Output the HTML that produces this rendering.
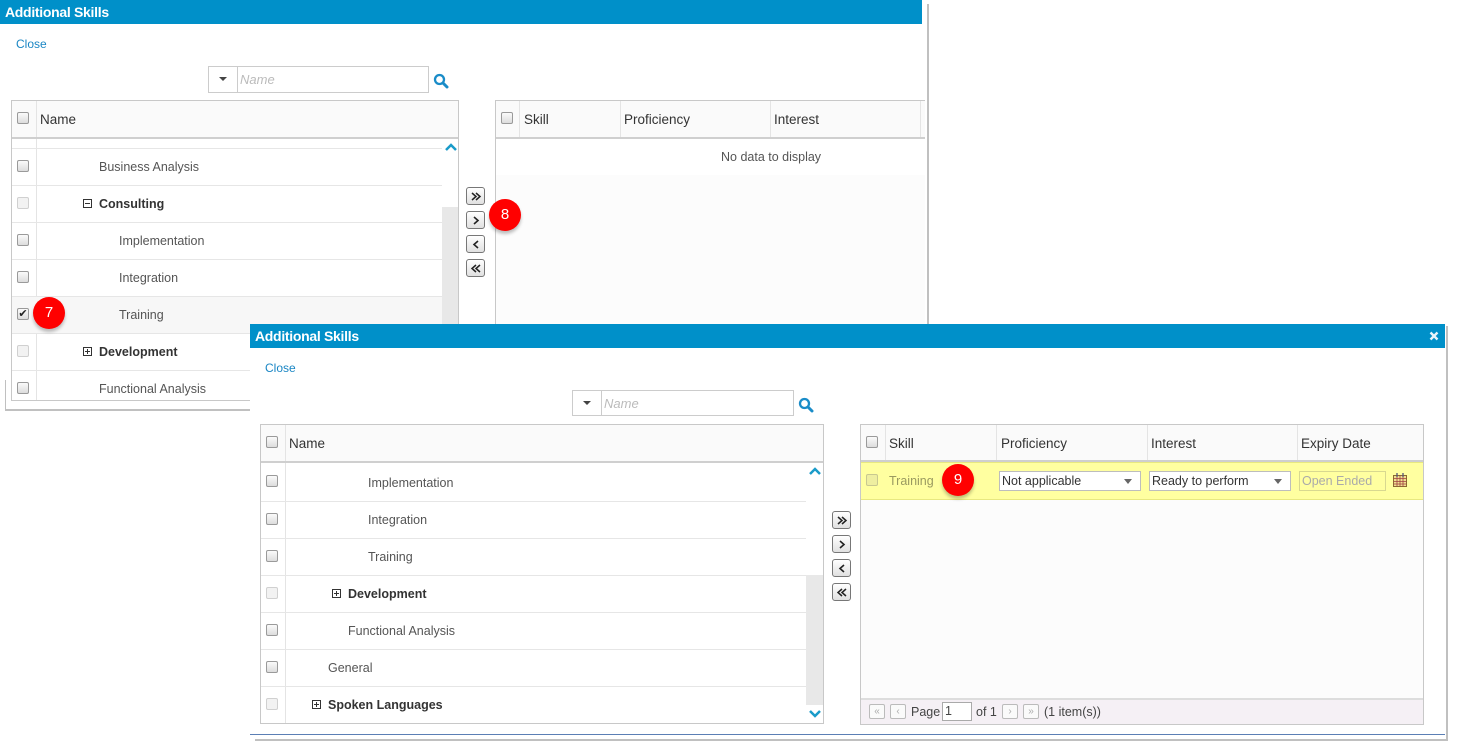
<!DOCTYPE html>
<html><head><meta charset="utf-8"><style>
*{box-sizing:border-box;margin:0;padding:0}
body{width:1462px;height:753px;background:#fff;position:relative;overflow:hidden;font-family:"Liberation Sans",sans-serif;font-size:12.5px;color:#444}
.a{position:absolute}
.hdr{background:#0090c9;color:#fff;font-weight:bold;font-size:14px;letter-spacing:-0.3px;padding-left:5px;line-height:24px}
.close{color:#1a86c4;font-size:12px}
.cb{position:absolute;width:12px;height:12px;border:1px solid #9a9a9a;border-radius:2px;background:linear-gradient(#fafafa,#dcdcdc)}
.cb.d{border-color:#d0d0d0;background:#f2f2f2}
.grid{position:absolute;border:1px solid #c8c8c8;background:#fff}
.gh{position:absolute;left:0;right:0;top:0;background:#fafafa;border-bottom:2px solid #cfcfcf}
.th{position:absolute;top:0;font-size:13.5px;color:#333}
.row{position:absolute;left:0;border-bottom:1px solid #e6e6e6}
.vl{position:absolute;width:1px;background:#e4e4e4}
.t{position:absolute;font-size:12.5px;color:#555}
.b{font-weight:bold;color:#333}
.pm{display:inline-block;width:9px;height:9px;border:1px solid #333;position:relative;margin-right:7px;vertical-align:0px}
.pm:before{content:"";position:absolute;left:1px;top:3px;width:5px;height:1px;background:#333}
.pm.p:after{content:"";position:absolute;left:3px;top:1px;width:1px;height:5px;background:#333}
.btn{position:absolute;width:19px;height:18px;border:1px solid #777;border-radius:3px;background:linear-gradient(#fff,#e0e0e0)}
.btn svg{position:absolute;left:2px;top:2px}
.pb{position:absolute;top:4px;width:16px;height:15px;border:1px solid #bbb;border-radius:2px;background:#fafafa;color:#aaa;font-size:10px;line-height:13px;text-align:center}
.badge{position:absolute;width:32px;height:32px;border-radius:50%;background:#f00;color:#fff;text-align:center;line-height:32px;font-size:15px;box-shadow:0 3px 3px rgba(0,0,0,.25)}
.sel{position:absolute;height:20px;border:1px solid #bdbdbd;background:#fff;font-size:12.5px;line-height:18px;padding-left:2px;color:#333}
.sel:after{content:"";position:absolute;right:8px;top:7px;border:4px solid transparent;border-top:5px solid #666}
</style></head><body>

<!-- Dialog 1 -->
<div class="a hdr" style="left:0;top:0;width:922px;height:24px">Additional Skills</div>
<div class="a" style="left:927px;top:4px;width:2px;height:320px;background:#c0c0c0"></div>
<div class="a" style="left:5px;top:409px;width:245px;height:2px;background:#c0c0c0"></div>
<div class="a" style="left:5px;top:380px;width:1px;height:30px;background:#c0c0c0"></div>
<div class="a close" style="left:16px;top:37px">Close</div>
<div class="a" style="left:208px;top:66px;width:221px;height:27px;border:1px solid #ccc;background:#fff">
 <div class="a" style="left:0;top:0;width:29px;height:25px;border-right:1px solid #ccc"><div class="a" style="left:10px;top:10px;border:4px solid transparent;border-top:4px solid #444"></div></div>
 <div class="a" style="left:31px;top:5px;font-style:italic;color:#bbb;font-size:13px">Name</div>
</div>
<svg class="a" style="left:433px;top:73px" width="16" height="16" viewBox="0 0 16 16"><circle cx="6.5" cy="6.5" r="4.5" fill="none" stroke="#1a8cc8" stroke-width="2.3"/><path d="M10 10l4 4" stroke="#1a8cc8" stroke-width="3" stroke-linecap="round"/></svg>

<div class="grid" style="left:11px;top:100px;width:448px;height:301px;overflow:hidden">
 <div class="gh" style="height:38px"><div class="cb" style="left:5px;top:11px"></div><div class="vl" style="left:24px;top:0;height:36px"></div><div class="th" style="left:28px;top:11px">Name</div></div>
 <div class="vl" style="left:24px;top:38px;height:263px"></div>
 <div class="row" style="top:38px;width:430px;height:10px"></div>
 <div class="row" style="top:48px;width:430px;height:37px"><div class="cb" style="left:5px;top:11px"></div><div class="t" style="left:87px;top:11px">Business Analysis</div></div>
 <div class="row" style="top:85px;width:430px;height:37px"><div class="cb d" style="left:5px;top:11px"></div><div class="t b" style="left:71px;top:11px"><span class="pm"></span>Consulting</div></div>
 <div class="row" style="top:122px;width:430px;height:37px"><div class="cb" style="left:5px;top:11px"></div><div class="t" style="left:107px;top:11px">Implementation</div></div>
 <div class="row" style="top:159px;width:430px;height:37px"><div class="cb" style="left:5px;top:11px"></div><div class="t" style="left:107px;top:11px">Integration</div></div>
 <div class="row" style="top:196px;width:430px;height:37px;background:#f7f7f7"><div class="cb" style="left:5px;top:11px;font-size:11px;line-height:10px;color:#222;text-align:center">✔</div><div class="t" style="left:107px;top:11px">Training</div></div>
 <div class="row" style="top:233px;width:430px;height:37px"><div class="cb d" style="left:5px;top:11px"></div><div class="t b" style="left:71px;top:11px"><span class="pm p"></span>Development</div></div>
 <div class="row" style="top:270px;width:430px;height:37px"><div class="cb" style="left:5px;top:11px"></div><div class="t" style="left:87px;top:11px">Functional Analysis</div></div>
 <div class="a" style="left:430px;top:38px;width:18px;height:263px;background:#fff"></div>
 <div class="a" style="left:430px;top:106px;width:18px;height:195px;background:#e8e8e8"></div>
 <svg class="a" style="left:432px;top:41px" width="14" height="10"><path d="M2 8l5-5 5 5" stroke="#1a9bc9" stroke-width="2.5" fill="none"/></svg>
</div>
<div class="btn" style="left:466px;top:187px"><svg width="14" height="13"><path d="M3 3l4 3.5-4 3.5M7 3l4 3.5-4 3.5" stroke="#222" stroke-width="1.5" fill="none"/></svg></div>
<div class="btn" style="left:466px;top:211px"><svg width="14" height="13"><path d="M5 3l4 3.5-4 3.5" stroke="#222" stroke-width="1.6" fill="none"/></svg></div>
<div class="btn" style="left:466px;top:235px"><svg width="14" height="13"><path d="M9 3l-4 3.5 4 3.5" stroke="#222" stroke-width="1.6" fill="none"/></svg></div>
<div class="btn" style="left:466px;top:259px"><svg width="14" height="13"><path d="M7 3l-4 3.5 4 3.5M11 3l-4 3.5 4 3.5" stroke="#222" stroke-width="1.5" fill="none"/></svg></div>

<div class="grid" style="left:495px;top:100px;width:430px;height:230px;border-right:none;background:#fcfcfc">
 <div class="gh" style="height:38px"><div class="cb" style="left:5px;top:11px"></div><div class="vl" style="left:23px;top:0;height:36px"></div><div class="th" style="left:28px;top:11px">Skill</div><div class="vl" style="left:124px;top:0;height:36px"></div><div class="th" style="left:128px;top:11px">Proficiency</div><div class="vl" style="left:274px;top:0;height:36px"></div><div class="th" style="left:278px;top:11px">Interest</div><div class="vl" style="left:424px;top:0;height:36px"></div></div>
 <div class="a" style="left:0;top:38px;width:430px;height:36px;background:#fff"></div>
 <div class="t" style="left:225px;top:49px">No data to display</div>
</div>
<div class="badge" style="left:33px;top:297px">7</div>
<div class="badge" style="left:489px;top:199px">8</div>

<!-- Dialog 2 -->
<div class="a" style="left:250px;top:324px;width:1198px;height:420px;background:#fff"></div>
<div class="a" style="left:1446px;top:326px;width:2px;height:415px;background:#c0c0c0"></div>
<div class="a" style="left:255px;top:739px;width:1193px;height:2px;background:#c0c0c0"></div>
<div class="a" style="left:250px;top:734px;width:1195px;height:1px;background:#5b7fb5"></div>
<div class="a hdr" style="left:250px;top:324px;width:1195px;height:24px">Additional Skills</div>
<svg class="a" style="left:1429px;top:331px" width="10" height="10"><path d="M1.5 1.5l7 7M8.5 1.5l-7 7" stroke="#e8f4fa" stroke-width="2.4"/></svg>
<div class="a close" style="left:265px;top:361px">Close</div>
<div class="a" style="left:572px;top:390px;width:222px;height:26px;border:1px solid #ccc;background:#fff">
 <div class="a" style="left:0;top:0;width:29px;height:24px;border-right:1px solid #ccc"><div class="a" style="left:10px;top:10px;border:4px solid transparent;border-top:4px solid #444"></div></div>
 <div class="a" style="left:31px;top:5px;font-style:italic;color:#bbb;font-size:13px">Name</div>
</div>
<svg class="a" style="left:798px;top:397px" width="16" height="16" viewBox="0 0 16 16"><circle cx="6.5" cy="6.5" r="4.5" fill="none" stroke="#1a8cc8" stroke-width="2.3"/><path d="M10 10l4 4" stroke="#1a8cc8" stroke-width="3" stroke-linecap="round"/></svg>

<div class="grid" style="left:260px;top:424px;width:564px;height:300px;overflow:hidden">
 <div class="gh" style="height:38px"><div class="cb" style="left:5px;top:11px"></div><div class="vl" style="left:24px;top:0;height:36px"></div><div class="th" style="left:28px;top:11px">Name</div></div>
 <div class="vl" style="left:24px;top:38px;height:262px"></div>
 <div class="row" style="top:38px;width:545px;height:39px"><div class="cb" style="left:5px;top:12px"></div><div class="t" style="left:107px;top:13px">Implementation</div></div>
 <div class="row" style="top:77px;width:545px;height:37px"><div class="cb" style="left:5px;top:11px"></div><div class="t" style="left:107px;top:11px">Integration</div></div>
 <div class="row" style="top:114px;width:545px;height:37px"><div class="cb" style="left:5px;top:11px"></div><div class="t" style="left:107px;top:11px">Training</div></div>
 <div class="row" style="top:151px;width:545px;height:37px"><div class="cb d" style="left:5px;top:11px"></div><div class="t b" style="left:71px;top:11px"><span class="pm p"></span>Development</div></div>
 <div class="row" style="top:188px;width:545px;height:37px"><div class="cb" style="left:5px;top:11px"></div><div class="t" style="left:87px;top:11px">Functional Analysis</div></div>
 <div class="row" style="top:225px;width:545px;height:37px"><div class="cb" style="left:5px;top:11px"></div><div class="t" style="left:67px;top:11px">General</div></div>
 <div class="row" style="top:262px;width:545px;height:37px;border:none"><div class="cb d" style="left:5px;top:11px"></div><div class="t b" style="left:51px;top:11px"><span class="pm p"></span>Spoken Languages</div></div>
 <div class="a" style="left:545px;top:38px;width:18px;height:262px;background:#fff"></div>
 <div class="a" style="left:545px;top:150px;width:18px;height:130px;background:#e8e8e8"></div>
 <svg class="a" style="left:547px;top:41px" width="14" height="10"><path d="M2 8l5-5 5 5" stroke="#1a9bc9" stroke-width="2.5" fill="none"/></svg>
 <svg class="a" style="left:547px;top:284px" width="14" height="10"><path d="M2 2l5 5 5-5" stroke="#1a9bc9" stroke-width="2.5" fill="none"/></svg>
</div>
<div class="btn" style="left:832px;top:511px"><svg width="14" height="13"><path d="M3 3l4 3.5-4 3.5M7 3l4 3.5-4 3.5" stroke="#222" stroke-width="1.5" fill="none"/></svg></div>
<div class="btn" style="left:832px;top:535px"><svg width="14" height="13"><path d="M5 3l4 3.5-4 3.5" stroke="#222" stroke-width="1.6" fill="none"/></svg></div>
<div class="btn" style="left:832px;top:559px"><svg width="14" height="13"><path d="M9 3l-4 3.5 4 3.5" stroke="#222" stroke-width="1.6" fill="none"/></svg></div>
<div class="btn" style="left:832px;top:583px"><svg width="14" height="13"><path d="M7 3l-4 3.5 4 3.5M11 3l-4 3.5 4 3.5" stroke="#222" stroke-width="1.5" fill="none"/></svg></div>

<div class="grid" style="left:860px;top:424px;width:564px;height:301px;background:#fcfcfc">
 <div class="gh" style="height:37px"><div class="cb" style="left:5px;top:11px"></div><div class="vl" style="left:24px;top:0;height:35px"></div><div class="th" style="left:28px;top:11px">Skill</div><div class="vl" style="left:135px;top:0;height:35px"></div><div class="th" style="left:140px;top:11px">Proficiency</div><div class="vl" style="left:286px;top:0;height:35px"></div><div class="th" style="left:290px;top:11px">Interest</div><div class="vl" style="left:436px;top:0;height:35px"></div><div class="th" style="left:440px;top:11px">Expiry Date</div></div>
 <div class="a" style="left:0;top:37px;width:562px;height:38px;background:#ffffa0;border-top:1px solid #e8e880;border-bottom:1px solid #e8e880">
  <div class="cb d" style="left:5px;top:11px;background:#eeeea0;border-color:#c8c890"></div>
  <div class="t" style="left:28px;top:11px;color:#9a9a60">Training</div>
  <div class="sel" style="left:138px;top:8px;width:142px">Not applicable</div>
  <div class="sel" style="left:288px;top:8px;width:142px">Ready to perform</div>
  <div class="a" style="left:438px;top:8px;width:87px;height:20px;border:1px solid #d8d890;color:#aaa;font-size:12.5px;line-height:18px;padding-left:2px">Open Ended</div>
  <svg class="a" style="left:531px;top:9px" width="16" height="16" viewBox="0 0 16 16"><rect x="1.5" y="3.5" width="13" height="11" fill="#f0e090" stroke="#8a6a30"/><path d="M1.5 6.5h13M1.5 9.5h13M1.5 12h13M5 3.5v11M8 3.5v11M11 3.5v11" stroke="#a04040" stroke-width="0.8"/><path d="M5 1v4M11 1v4" stroke="#557" stroke-width="1.3"/></svg>
 </div>
 <div class="a" style="left:0;top:273px;width:562px;height:26px;background:#f5f0f5;border-top:2px solid #ddd">
  <div class="pb" style="left:8px">«</div>
  <div class="pb" style="left:29px">‹</div>
  <div class="t" style="left:50px;top:5px;color:#444">Page</div>
  <div class="a" style="left:81px;top:2px;width:30px;height:19px;border:1px solid #aaa;background:#fff;font-size:12.5px;padding-left:2px;line-height:17px">1</div>
  <div class="t" style="left:115px;top:5px;color:#444">of 1</div>
  <div class="pb" style="left:141px">›</div>
  <div class="pb" style="left:162px">»</div>
  <div class="t" style="left:183px;top:5px;color:#444">(1 item(s))</div>
 </div>
</div>
<div class="badge" style="left:942px;top:464px">9</div>
</body></html>
